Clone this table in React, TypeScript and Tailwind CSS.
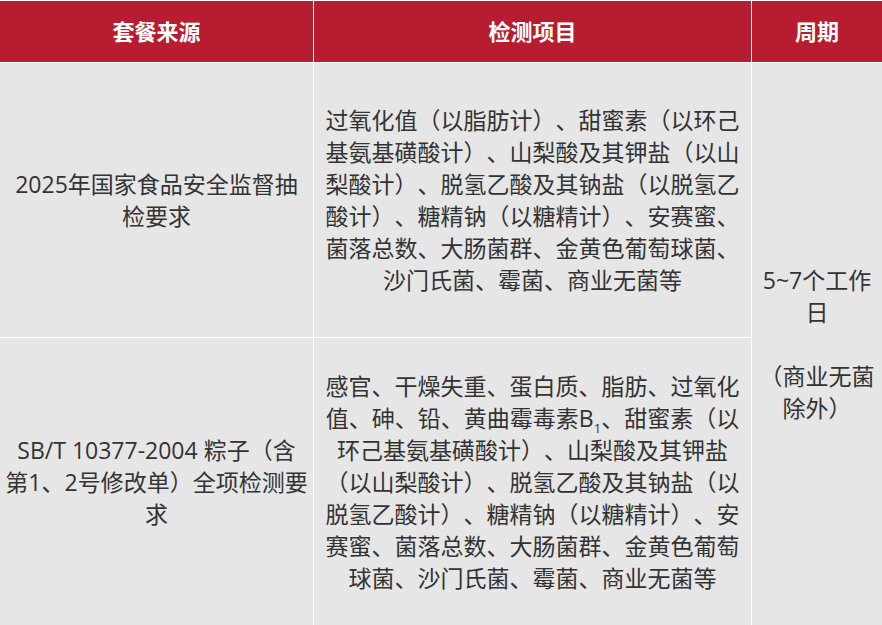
import React from "react";

const font = "font-['Open_Sans','Noto_Sans_CJK_SC',sans-serif]";

function Lines({ lines }: { lines: React.ReactNode[] }) {
  return (
    <div className="flex flex-col items-center">
      {lines.map((l, i) => (
        <div key={i} className="whitespace-nowrap h-[32px]">
          {l}
        </div>
      ))}
    </div>
  );
}

export default function App() {
  const cell =
    "bg-[#e6e6e6] text-[#333333] text-[23px] leading-[32px] flex items-center justify-center text-center [text-spacing-trim:space-all]";
  const head =
    "bg-[#b81c30] text-white text-[22px] font-bold flex items-center justify-center";
  return (
    <div className={`w-[882px] h-[625px] bg-white pt-px overflow-hidden ${font}`}>
      <div className="grid grid-cols-[313px_437px_130px] grid-rows-[61px_274px_287px] gap-px">
        <div className={head}>套餐来源</div>
        <div className={head}>检测项目</div>
        <div className={head}>周期</div>

        <div className={cell}>
          <Lines lines={["2025年国家食品安全监督抽", "检要求"]} />
        </div>
        <div className={cell}>
          <Lines
            lines={[
              "过氧化值（以脂肪计）、甜蜜素（以环己",
              "基氨基磺酸计）、山梨酸及其钾盐（以山",
              "梨酸计）、脱氢乙酸及其钠盐（以脱氢乙",
              "酸计）、糖精钠（以糖精计）、安赛蜜、",
              "菌落总数、大肠菌群、金黄色葡萄球菌、",
              "沙门氏菌、霉菌、商业无菌等",
            ]}
          />
        </div>
        <div className={`${cell} row-span-2`}>
          <Lines lines={["5~7个工作", "日", "", "（商业无菌", "除外）"]} />
        </div>

        <div className={cell}>
          <Lines
            lines={["SB/T 10377-2004 粽子（含", "第1、2号修改单）全项检测要", "求"]}
          />
        </div>
        <div className={cell}>
          <Lines
            lines={[
              "感官、干燥失重、蛋白质、脂肪、过氧化",
              <>
                值、砷、铅、黄曲霉毒素B
                <span className="text-[13px] relative top-[6px]">1</span>、甜蜜素（以
              </>,
              "环己基氨基磺酸计）、山梨酸及其钾盐",
              "（以山梨酸计）、脱氢乙酸及其钠盐（以",
              "脱氢乙酸计）、糖精钠（以糖精计）、安",
              "赛蜜、菌落总数、大肠菌群、金黄色葡萄",
              "球菌、沙门氏菌、霉菌、商业无菌等",
            ]}
          />
        </div>
      </div>
    </div>
  );
}
